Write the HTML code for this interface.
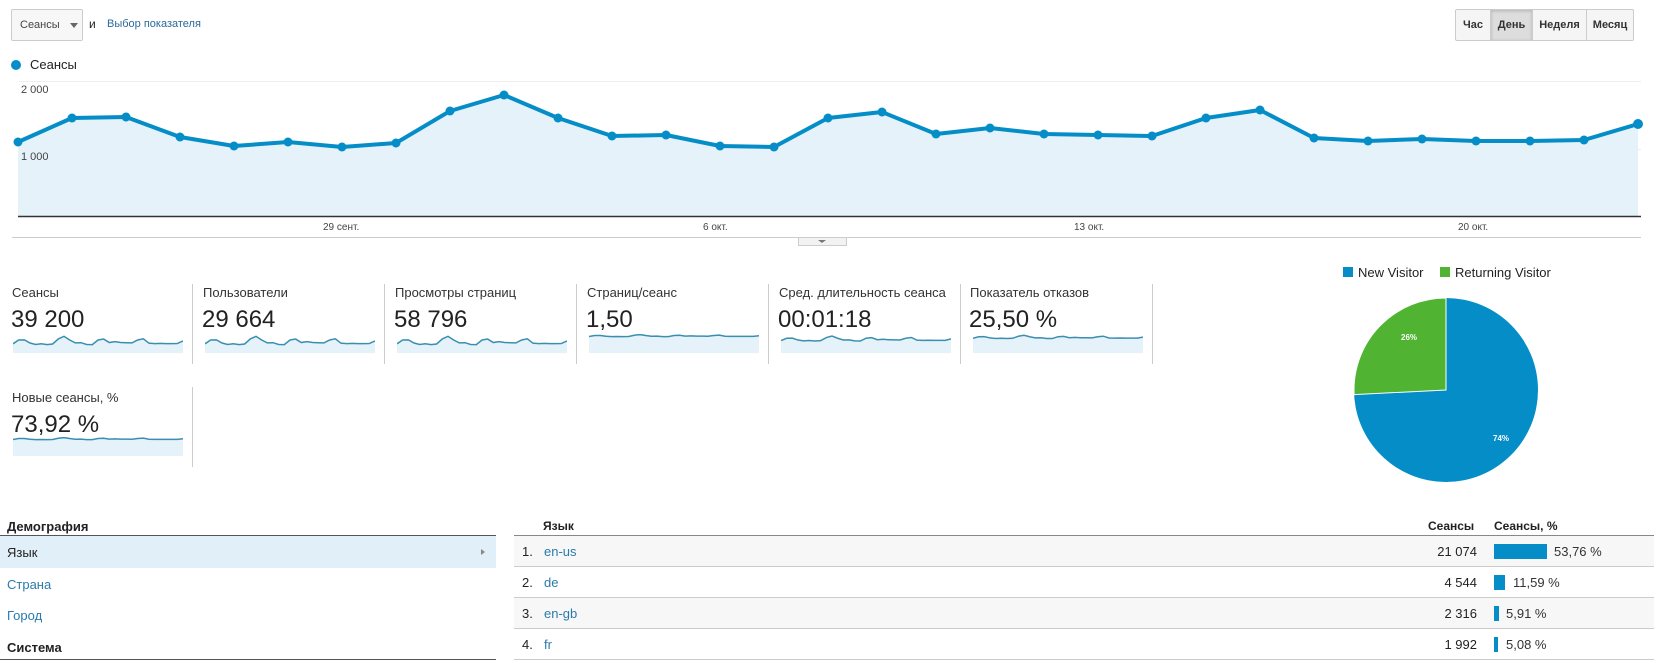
<!DOCTYPE html>
<html><head><meta charset="utf-8">
<style>
*{margin:0;padding:0;box-sizing:border-box}
body{width:1654px;height:664px;background:#fff;position:relative;overflow:hidden;font-family:"Liberation Sans",Arial,sans-serif;color:#222}
.a{position:absolute;white-space:nowrap}
.btn{position:absolute;top:9px;height:32px;border:1px solid #ccc;background:#f5f5f5;font-size:11px;font-weight:bold;color:#333;display:flex;align-items:center;justify-content:center}
.ml{font-size:13px;color:#333}
.mv{font-size:24px;color:#222}
.div{position:absolute;width:1px;background:#ccc}
.link{color:#2a7bab}
.row{position:absolute;left:514px;width:1140px;height:31px;border-bottom:1px solid #ccc;font-size:13px}
.row span{position:absolute;top:8px}
</style></head><body>

<div class="a" style="left:11px;top:9px;width:72px;height:32px;border:1px solid #ccc;border-radius:2px;background:#f7f7f7;font-size:11px;color:#444;padding:9px 0 0 8px">Сеансы<span style="position:absolute;left:58px;top:13px;width:0;height:0;border-left:4px solid transparent;border-right:4px solid transparent;border-top:5px solid #666"></span></div>
<div class="a" style="left:89px;top:17px;font-size:12px;color:#222">и</div>
<div class="a" style="left:107px;top:18px;font-size:11px;color:#2a6a9b">Выбор показателя</div>

<div class="btn" style="left:1455px;width:36px;border-radius:2px 0 0 2px">Час</div>
<div class="btn" style="left:1490px;width:43px;background:#ddd;box-shadow:inset 0 1px 3px rgba(0,0,0,.2)">День</div>
<div class="btn" style="left:1532px;width:55px">Неделя</div>
<div class="btn" style="left:1586px;width:48px;border-radius:0 2px 2px 0">Месяц</div>

<div class="a" style="left:11px;top:60px;width:10px;height:10px;border-radius:50%;background:#058dc7"></div>
<div class="a" style="left:30px;top:57px;font-size:13px;color:#222">Сеансы</div>

<svg class="a" style="left:0;top:0" width="1654" height="250">
<line x1="19" y1="81.5" x2="1641" y2="81.5" stroke="#eee"/>
<line x1="19" y1="149.5" x2="1641" y2="149.5" stroke="#eee"/>
<polygon fill="#e5f2fa" points="18,216 18,142 72,118 126,117 180,137 234,146 288,142 342,147 396,143 450,111 504,95 558,118 612,136 666,135 720,146 774,147 828,118 882,112 936,134 990,128 1044,134 1098,135 1152,136 1206,118 1260,110 1314,138 1368,141 1422,139 1476,141 1530,141 1584,140 1638,124 1638,216"/>
<polyline fill="none" stroke="#058dc7" stroke-width="4" stroke-linejoin="round" points="18,142 72,118 126,117 180,137 234,146 288,142 342,147 396,143 450,111 504,95 558,118 612,136 666,135 720,146 774,147 828,118 882,112 936,134 990,128 1044,134 1098,135 1152,136 1206,118 1260,110 1314,138 1368,141 1422,139 1476,141 1530,141 1584,140 1638,124"/>
<g fill="#058dc7">
<circle cx="18" cy="142" r="4.5"/><circle cx="72" cy="118" r="4.5"/><circle cx="126" cy="117" r="4.5"/><circle cx="180" cy="137" r="4.5"/><circle cx="234" cy="146" r="4.5"/><circle cx="288" cy="142" r="4.5"/><circle cx="342" cy="147" r="4.5"/><circle cx="396" cy="143" r="4.5"/><circle cx="450" cy="111" r="4.5"/><circle cx="504" cy="95" r="4.5"/><circle cx="558" cy="118" r="4.5"/><circle cx="612" cy="136" r="4.5"/><circle cx="666" cy="135" r="4.5"/><circle cx="720" cy="146" r="4.5"/><circle cx="774" cy="147" r="4.5"/><circle cx="828" cy="118" r="4.5"/><circle cx="882" cy="112" r="4.5"/><circle cx="936" cy="134" r="4.5"/><circle cx="990" cy="128" r="4.5"/><circle cx="1044" cy="134" r="4.5"/><circle cx="1098" cy="135" r="4.5"/><circle cx="1152" cy="136" r="4.5"/><circle cx="1206" cy="118" r="4.5"/><circle cx="1260" cy="110" r="4.5"/><circle cx="1314" cy="138" r="4.5"/><circle cx="1368" cy="141" r="4.5"/><circle cx="1422" cy="139" r="4.5"/><circle cx="1476" cy="141" r="4.5"/><circle cx="1530" cy="141" r="4.5"/><circle cx="1584" cy="140" r="4.5"/><circle cx="1638" cy="124" r="5"/>
</g>
<line x1="18" y1="216.5" x2="1641" y2="216.5" stroke="#333" stroke-width="1.5"/>
<line x1="12" y1="237.5" x2="1641" y2="237.5" stroke="#ccc"/>
<rect x="798.5" y="237.5" width="48" height="8" fill="#f2f2f2" stroke="#ccc"/>
<polygon points="818,240 826,240 822,243" fill="#777"/>
</svg>
<div class="a" style="left:21px;top:84px;font-size:11px;color:#444">2 000</div>
<div class="a" style="left:21px;top:151px;font-size:11px;color:#444">1 000</div>
<div class="a" style="left:323px;top:222px;font-size:10px;color:#444">29 сент.</div>
<div class="a" style="left:703px;top:222px;font-size:10px;color:#444">6 окт.</div>
<div class="a" style="left:1074px;top:222px;font-size:10px;color:#444">13 окт.</div>
<div class="a" style="left:1458px;top:222px;font-size:10px;color:#444">20 окт.</div>

<div class="a ml" style="left:12px;top:285px">Сеансы</div>
<div class="a mv" style="left:11px;top:306px">39 200</div>
<div class="a ml" style="left:203px;top:285px">Пользователи</div>
<div class="a mv" style="left:202px;top:306px">29 664</div>
<div class="a ml" style="left:395px;top:285px">Просмотры страниц</div>
<div class="a mv" style="left:394px;top:306px">58 796</div>
<div class="a ml" style="left:587px;top:285px">Страниц/сеанс</div>
<div class="a mv" style="left:586px;top:306px">1,50</div>
<div class="a ml" style="left:779px;top:285px">Сред. длительность сеанса</div>
<div class="a mv" style="left:778px;top:306px">00:01:18</div>
<div class="a ml" style="left:970px;top:285px">Показатель отказов</div>
<div class="a mv" style="left:969px;top:306px">25,50 %</div>
<div class="a ml" style="left:12px;top:390px">Новые сеансы, %</div>
<div class="a mv" style="left:11px;top:411px">73,92 %</div>

<div class="div" style="left:192px;top:284px;height:80px"></div>
<div class="div" style="left:384px;top:284px;height:80px"></div>
<div class="div" style="left:576px;top:284px;height:80px"></div>
<div class="div" style="left:768px;top:284px;height:80px"></div>
<div class="div" style="left:960px;top:284px;height:80px"></div>
<div class="div" style="left:1152px;top:284px;height:80px"></div>
<div class="div" style="left:192px;top:387px;height:80px"></div>

<svg width="0" height="0" style="position:absolute"><defs>
<g id="sp">
<polygon fill="#e5f2fa" points="18,1000 18,142 72,118 126,117 180,137 234,146 288,142 342,147 396,143 450,111 504,95 558,118 612,136 666,135 720,146 774,147 828,118 882,112 936,134 990,128 1044,134 1098,135 1152,136 1206,118 1260,110 1314,138 1368,141 1422,139 1476,141 1530,141 1584,140 1638,124 1638,1000"/>
<polyline fill="none" stroke="#3a8fb0" stroke-width="1.5" vector-effect="non-scaling-stroke" points="18,142 72,118 126,117 180,137 234,146 288,142 342,147 396,143 450,111 504,95 558,118 612,136 666,135 720,146 774,147 828,118 882,112 936,134 990,128 1044,134 1098,135 1152,136 1206,118 1260,110 1314,138 1368,141 1422,139 1476,141 1530,141 1584,140 1638,124"/>
</g></defs></svg>
<svg class="a" style="left:13px;top:334px" width="170" height="19" viewBox="18 80 1620 120" preserveAspectRatio="none"><use href="#sp"/></svg>
<svg class="a" style="left:205px;top:334px" width="170" height="19" viewBox="18 80 1620 120" preserveAspectRatio="none"><use href="#sp"/></svg>
<svg class="a" style="left:397px;top:334px" width="170" height="19" viewBox="18 80 1620 120" preserveAspectRatio="none"><use href="#sp"/></svg>
<svg class="a" style="left:589px;top:334px" width="170" height="19" viewBox="18 80 1620 120" preserveAspectRatio="none"><use href="#sp" transform="translate(0,60) scale(1,0.25)"/></svg>
<svg class="a" style="left:781px;top:334px" width="170" height="19" viewBox="18 80 1620 120" preserveAspectRatio="none"><use href="#sp" transform="translate(0,36) scale(1,0.6)"/></svg>
<svg class="a" style="left:973px;top:334px" width="170" height="19" viewBox="18 80 1620 120" preserveAspectRatio="none"><use href="#sp" transform="translate(0,50) scale(1,0.4)"/></svg>
<svg class="a" style="left:13px;top:437px" width="170" height="19" viewBox="18 80 1620 120" preserveAspectRatio="none"><use href="#sp" transform="translate(0,60) scale(1,0.25)"/></svg>

<div class="a" style="left:1343px;top:267px;width:10px;height:10px;background:#058dc7"></div>
<div class="a" style="left:1358px;top:265px;font-size:13px;color:#222">New Visitor</div>
<div class="a" style="left:1440px;top:267px;width:10px;height:10px;background:#50b432"></div>
<div class="a" style="left:1455px;top:265px;font-size:13px;color:#222">Returning Visitor</div>
<svg class="a" style="left:1353px;top:297px" width="186" height="186">
<circle cx="93" cy="93" r="92" fill="#058dc7"/>
<path d="M93,93 L93,1 A92,92 0 0 0 1.1,97.6 Z" fill="#50b432" stroke="#fff" stroke-width="1"/>
<text x="48" y="43" font-size="8" font-weight="bold" fill="#fff" font-family="Liberation Sans">26%</text>
<text x="140" y="144" font-size="8" font-weight="bold" fill="#fff" font-family="Liberation Sans">74%</text>
</svg>

<div class="a" style="left:7px;top:519px;font-size:13px;font-weight:bold;color:#222">Демография</div>
<div class="a" style="left:0;top:535px;width:496px;height:1px;background:#555"></div>
<div class="a" style="left:0;top:536px;width:496px;height:32px;background:#e1eff8"></div>
<div class="a" style="left:7px;top:545px;font-size:13px;color:#222">Язык</div>
<div class="a" style="left:481px;top:549px;width:0;height:0;border-top:3px solid transparent;border-bottom:3px solid transparent;border-left:4px solid #888"></div>
<div class="a link" style="left:7px;top:577px;font-size:13px">Страна</div>
<div class="a link" style="left:7px;top:608px;font-size:13px">Город</div>
<div class="a" style="left:7px;top:640px;font-size:13px;font-weight:bold;color:#222">Система</div>
<div class="a" style="left:0;top:659px;width:496px;height:1px;background:#555"></div>

<div class="a" style="left:543px;top:519px;font-size:12px;font-weight:bold;color:#222">Язык</div>
<div class="a" style="left:1428px;top:519px;font-size:12px;font-weight:bold;color:#222">Сеансы</div>
<div class="a" style="left:1494px;top:519px;font-size:12px;font-weight:bold;color:#222">Сеансы, %</div>
<div class="a" style="left:514px;top:535px;width:1140px;height:1px;background:#888"></div>

<div class="row" style="top:536px;background:#f7f7f7"><span style="left:8px">1.</span><span class="link" style="left:30px">en-us</span><span style="right:177px">21 074</span><span style="left:980px;top:8px;width:53px;height:15px;background:#058dc7"></span><span style="left:1040px;color:#333">53,76 %</span></div>
<div class="row" style="top:567px"><span style="left:8px">2.</span><span class="link" style="left:30px">de</span><span style="right:177px">4 544</span><span style="left:980px;top:8px;width:11px;height:15px;background:#058dc7"></span><span style="left:999px;color:#333">11,59 %</span></div>
<div class="row" style="top:598px;background:#f7f7f7"><span style="left:8px">3.</span><span class="link" style="left:30px">en-gb</span><span style="right:177px">2 316</span><span style="left:980px;top:8px;width:5px;height:15px;background:#058dc7"></span><span style="left:992px;color:#333">5,91 %</span></div>
<div class="row" style="top:629px"><span style="left:8px">4.</span><span class="link" style="left:30px">fr</span><span style="right:177px">1 992</span><span style="left:980px;top:8px;width:4px;height:15px;background:#058dc7"></span><span style="left:992px;color:#333">5,08 %</span></div>

</body></html>
